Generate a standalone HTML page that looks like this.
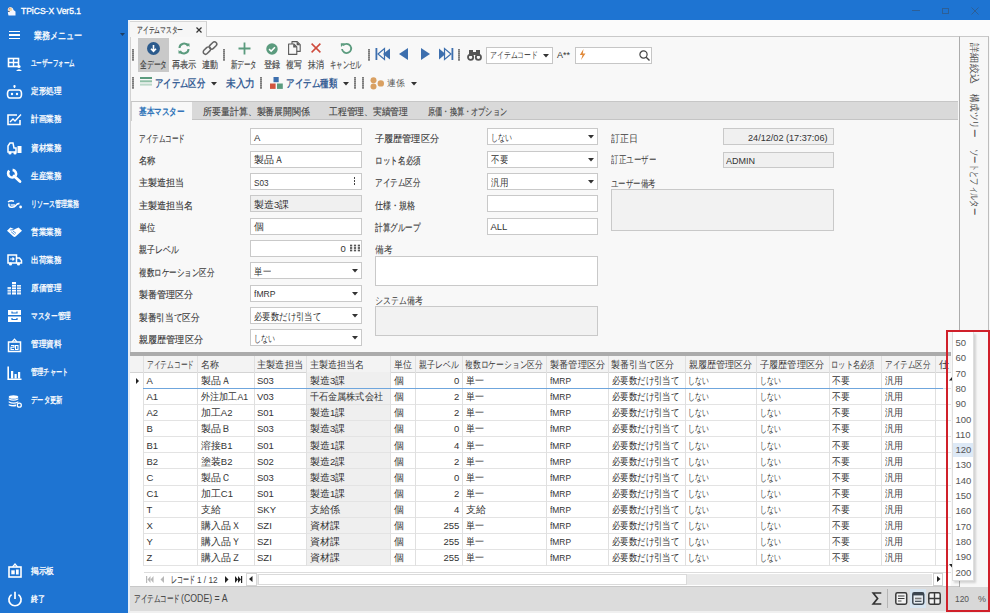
<!DOCTYPE html><html><head><meta charset="utf-8"><style>
html,body{margin:0;padding:0;width:990px;height:613px;overflow:hidden;background:#1e74d2}
body{position:relative;font-family:"Liberation Sans",sans-serif}
body div{position:absolute;box-sizing:border-box}
.t{white-space:nowrap}
.s{-webkit-text-stroke:0.15px currentColor}
svg{position:absolute;overflow:visible}
</style></head><body>
<div style="left:0px;top:0px;width:990px;height:613px;background:#1e74d2"></div>
<svg style="left:6px;top:6px" width="10" height="10" viewBox="0 0 10 10"><path d="M2 5Q1 2 4 1.2Q7 1 7.5 4L9.5 5.5V9.5H2.5Q1.5 7 2 5z" fill="#f4f6ff"/><circle cx="4.2" cy="3.2" r="1.9" fill="#f0d8a8"/><circle cx="3.6" cy="2.6" r="0.8" fill="#e08a80"/><path d="M2 5.2L3.6 5.6" stroke="#334" stroke-width="0.9"/></svg>
<div class="t" style="left:21.00px;top:4.25px;width:64.0px;font-size:9.5px;line-height:13.5px;color:#fff;font-weight:400;-webkit-text-stroke:0.35px #fff;transform:scaleX(0.895);transform-origin:0 50%;--tw:60.00;"><span>TPiCS-X Ver5.1</span></div>
<div style="left:912px;top:10px;width:8px;height:1px;background:#2d5f96"></div>
<div style="left:942px;top:8px;width:7px;height:6px;border:1px solid #2d5f96"></div>
<svg style="left:971px;top:7px" width="8" height="8" viewBox="0 0 8 8"><path d="M0.5 0.5L7.5 7.5M7.5 0.5L0.5 7.5" stroke="#2d5f96" stroke-width="1"/></svg>
<div style="left:9px;top:31.0px;width:11px;height:1.4px;background:#fff"></div>
<div style="left:9px;top:34.4px;width:11px;height:1.4px;background:#fff"></div>
<div style="left:9px;top:37.8px;width:11px;height:1.4px;background:#fff"></div>
<div class="t" style="left:33.50px;top:28.80px;width:52.5px;font-size:10px;line-height:14px;color:#fff;font-weight:400;-webkit-text-stroke:0.3px #fff;transform:scaleX(0.808);transform-origin:0 50%;--tw:48.50;"><span>業務メニュー</span></div>
<svg style="left:120px;top:33px" width="5" height="4"><path d="M0 0L5 0L2.5 3z" fill="#1b3f66"/></svg>
<div class="t" style="left:30.50px;top:57.25px;width:48.0px;font-size:8.5px;line-height:12.5px;color:#fff;font-weight:400;-webkit-text-stroke:0.3px #fff;transform:scaleX(0.611);transform-origin:0 50%;--tw:44.00;"><span>ユーザーフォーム</span></div>
<svg style="left:7px;top:56.5px" width="15" height="14" viewBox="0 0 15 14"><rect x="1.5" y="1.5" width="10" height="8" fill="none" stroke="#fff" stroke-width="1.6"/><path d="M1.5 5.5H11.5M6.5 1.5V9.5" stroke="#fff" stroke-width="1.4"/><circle cx="12" cy="9.5" r="1.6" fill="#fff"/><path d="M9 14Q12 10.5 15 14z" fill="#fff"/></svg>
<div class="t" style="left:30.50px;top:85.35px;width:34.5px;font-size:8.5px;line-height:12.5px;color:#fff;font-weight:400;-webkit-text-stroke:0.3px #fff;transform:scaleX(0.847);transform-origin:0 50%;--tw:30.50;"><span>定形処理</span></div>
<svg style="left:7px;top:84.6px" width="15" height="14" viewBox="0 0 15 14"><path d="M7.5 0.5V3" stroke="#fff" stroke-width="1.4"/><circle cx="7.5" cy="1.2" r="1.1" fill="#fff"/><path d="M3 5H12Q14.5 5 14.5 9Q14.5 13 12 13H3Q0.5 13 0.5 9Q0.5 5 3 5z" fill="none" stroke="#fff" stroke-width="1.6"/><circle cx="5" cy="9" r="1.2" fill="#fff"/><circle cx="10" cy="9" r="1.2" fill="#fff"/></svg>
<div class="t" style="left:30.50px;top:113.45px;width:34.5px;font-size:8.5px;line-height:12.5px;color:#fff;font-weight:400;-webkit-text-stroke:0.3px #fff;transform:scaleX(0.847);transform-origin:0 50%;--tw:30.50;"><span>計画業務</span></div>
<svg style="left:7px;top:112.7px" width="15" height="14" viewBox="0 0 15 14"><path d="M10 2H1V11.5H13V7" fill="none" stroke="#fff" stroke-width="1.6"/><path d="M3 9L6 6L8 8L14 1.5" fill="none" stroke="#fff" stroke-width="1.4"/></svg>
<div class="t" style="left:30.50px;top:141.55px;width:34.5px;font-size:8.5px;line-height:12.5px;color:#fff;font-weight:400;-webkit-text-stroke:0.3px #fff;transform:scaleX(0.847);transform-origin:0 50%;--tw:30.50;"><span>資材業務</span></div>
<svg style="left:7px;top:140.8px" width="15" height="14" viewBox="0 0 15 14"><path d="M1 9V5L3 2H6L7 7H9V11H1z" fill="none" stroke="#fff" stroke-width="1.5"/><circle cx="3" cy="12" r="1.6" fill="#fff"/><circle cx="8" cy="12" r="1.6" fill="#fff"/><rect x="10.5" y="5" width="4" height="7" fill="#fff"/></svg>
<div class="t" style="left:30.50px;top:169.65px;width:34.5px;font-size:8.5px;line-height:12.5px;color:#fff;font-weight:400;-webkit-text-stroke:0.3px #fff;transform:scaleX(0.847);transform-origin:0 50%;--tw:30.50;"><span>生産業務</span></div>
<svg style="left:7px;top:168.9px" width="15" height="14" viewBox="0 0 15 14"><path d="M2.2 1.6A4 4 0 1 0 8.2 7.2" fill="none" stroke="#fff" stroke-width="2.6"/><path d="M8.6 6.8A4 4 0 0 0 5.6 0.9" fill="none" stroke="#fff" stroke-width="2.6"/><path d="M7 7L13 12.6" stroke="#fff" stroke-width="2.8" stroke-linecap="round"/></svg>
<div class="t" style="left:30.50px;top:197.75px;width:52.0px;font-size:8.5px;line-height:12.5px;color:#fff;font-weight:400;-webkit-text-stroke:0.3px #fff;transform:scaleX(0.667);transform-origin:0 50%;--tw:48.00;"><span>リソース管理業務</span></div>
<svg style="left:7px;top:197.0px" width="15" height="14" viewBox="0 0 15 14"><g transform="translate(0,3)"><path d="M1 2Q3.5 0 7 1.2" fill="none" stroke="#fff" stroke-width="1.5"/><path d="M2 3.6Q1.2 7 4.5 7.2Q7.5 7.4 9 5.2Q10 3.6 12.5 3.4" fill="none" stroke="#fff" stroke-width="1.6"/><path d="M3.6 5H8" stroke="#fff" stroke-width="1.3"/><circle cx="13.6" cy="7" r="1.4" fill="#fff"/></g></svg>
<div class="t" style="left:30.50px;top:225.85px;width:34.5px;font-size:8.5px;line-height:12.5px;color:#fff;font-weight:400;-webkit-text-stroke:0.3px #fff;transform:scaleX(0.847);transform-origin:0 50%;--tw:30.50;"><span>営業業務</span></div>
<svg style="left:7px;top:225.1px" width="15" height="14" viewBox="0 0 15 14"><g transform="translate(0,2)"><path d="M0 3.8L3.4 0.6L7.5 2.2L11.6 0.6L15 3.8L8.6 9.6Q7.5 10.4 6.4 9.6z" fill="#fff"/><path d="M4.2 4.8L7.6 7.6M5.8 3.8L9 6.4M3.2 3L7.4 2.4" stroke="#1e74d2" stroke-width="0.8" fill="none"/></g></svg>
<div class="t" style="left:30.50px;top:253.95px;width:34.5px;font-size:8.5px;line-height:12.5px;color:#fff;font-weight:400;-webkit-text-stroke:0.3px #fff;transform:scaleX(0.847);transform-origin:0 50%;--tw:30.50;"><span>出荷業務</span></div>
<svg style="left:7px;top:253.2px" width="15" height="14" viewBox="0 0 15 14"><path d="M1 2H9.5V10H1z" fill="none" stroke="#fff" stroke-width="1.5"/><path d="M9.5 5H12.5L14.5 7.5V10H9.5" fill="none" stroke="#fff" stroke-width="1.5"/><circle cx="3.5" cy="11" r="1.6" fill="#fff"/><circle cx="11.5" cy="11" r="1.6" fill="#fff"/><path d="M3 6H7M5.5 4.5L7 6L5.5 7.5" stroke="#fff" stroke-width="1.2" fill="none"/></svg>
<div class="t" style="left:30.50px;top:282.05px;width:34.5px;font-size:8.5px;line-height:12.5px;color:#fff;font-weight:400;-webkit-text-stroke:0.3px #fff;transform:scaleX(0.847);transform-origin:0 50%;--tw:30.50;"><span>原価管理</span></div>
<svg style="left:7px;top:281.3px" width="15" height="14" viewBox="0 0 15 14"><g fill="#fff"><rect x="0.5" y="6" width="3.5" height="7.5" opacity=".85"/><rect x="5" y="1" width="4" height="12.5"/><rect x="10" y="4" width="4" height="9.5" opacity=".9"/></g><path d="M0 8.5H15M0 11H15M5 3.5H9M5 6H15" stroke="#1e74d2" stroke-width="0.7"/></svg>
<div class="t" style="left:30.50px;top:310.15px;width:44.0px;font-size:8.5px;line-height:12.5px;color:#fff;font-weight:400;-webkit-text-stroke:0.3px #fff;transform:scaleX(0.741);transform-origin:0 50%;--tw:40.00;"><span>マスター管理</span></div>
<svg style="left:7px;top:309.4px" width="15" height="14" viewBox="0 0 15 14"><path d="M1 1H14V6H1zM1 7.5H14V13H1z" fill="#fff"/><path d="M5 2.5V4H10V2.5M5 9V10.5H10V9" fill="none" stroke="#1e74d2" stroke-width="1.2"/></svg>
<div class="t" style="left:30.50px;top:338.25px;width:34.5px;font-size:8.5px;line-height:12.5px;color:#fff;font-weight:400;-webkit-text-stroke:0.3px #fff;transform:scaleX(0.847);transform-origin:0 50%;--tw:30.50;"><span>管理資料</span></div>
<svg style="left:7px;top:337.5px" width="15" height="14" viewBox="0 0 15 14"><rect x="1.5" y="4" width="12" height="9.5" fill="none" stroke="#fff" stroke-width="1.5"/><path d="M5 4L7.5 1.2L10 4" fill="none" stroke="#fff" stroke-width="1.2"/><path d="M4 7.5H7V9.2H4V11.5H7M8.5 7.5H11V11.5H8.5z" fill="none" stroke="#fff" stroke-width="1.1"/></svg>
<div class="t" style="left:30.50px;top:366.35px;width:41.5px;font-size:8.5px;line-height:12.5px;color:#fff;font-weight:400;-webkit-text-stroke:0.3px #fff;transform:scaleX(0.694);transform-origin:0 50%;--tw:37.50;"><span>管理チャート</span></div>
<svg style="left:7px;top:365.6px" width="15" height="14" viewBox="0 0 15 14"><path d="M1.2 0.5V13.3H14.5" fill="none" stroke="#fff" stroke-width="1.6"/><rect x="4" y="5" width="2.2" height="7.5" fill="#fff"/><rect x="7.5" y="8" width="2.2" height="4.5" fill="#fff"/><rect x="11" y="6" width="2.2" height="6.5" fill="#fff"/></svg>
<div class="t" style="left:30.50px;top:394.45px;width:35.5px;font-size:8.5px;line-height:12.5px;color:#fff;font-weight:400;-webkit-text-stroke:0.3px #fff;transform:scaleX(0.700);transform-origin:0 50%;--tw:31.50;"><span>データ更新</span></div>
<svg style="left:7px;top:393.7px" width="15" height="14" viewBox="0 0 15 14"><g transform="translate(1,1)"><ellipse cx="5.5" cy="2" rx="4.8" ry="1.8" fill="#fff"/><path d="M0.7 3.2V4.6Q5.5 7 10.3 4.6V3.2Q5.5 5.6 0.7 3.2z" fill="#fff"/><path d="M0.7 6.2V7.6Q5.5 10 10.3 7.6V6.2Q5.5 8.6 0.7 6.2z" fill="#fff"/><path d="M0.7 9.2V10.4Q4 12 8 11.2V9.6Q4 10.6 0.7 9.2z" fill="#fff"/><circle cx="11.3" cy="10.2" r="2" fill="none" stroke="#fff" stroke-width="1.3"/></g></svg>
<div class="t" style="left:30.70px;top:565.25px;width:27.2px;font-size:8.5px;line-height:12.5px;color:#fff;font-weight:400;-webkit-text-stroke:0.3px #fff;transform:scaleX(0.859);transform-origin:0 50%;--tw:23.20;"><span>掲示板</span></div>
<svg style="left:7.5px;top:563px" width="14" height="15" viewBox="0 0 14 15"><rect x="1" y="4" width="12" height="10" fill="none" stroke="#fff" stroke-width="1.6"/><path d="M4.5 4L7 1L9.5 4" fill="none" stroke="#fff" stroke-width="1.2"/><rect x="3.3" y="7.3" width="3.4" height="4" fill="#fff"/><rect x="8" y="6.5" width="2.7" height="5" fill="#fff"/></svg>
<div class="t" style="left:30.70px;top:593.25px;width:18.3px;font-size:8.5px;line-height:12.5px;color:#fff;font-weight:400;-webkit-text-stroke:0.3px #fff;transform:scaleX(0.794);transform-origin:0 50%;--tw:14.30;"><span>終了</span></div>
<svg style="left:6.5px;top:591px" width="16" height="16" viewBox="0 0 16 16"><path d="M4.6 3.6A6.1 6.1 0 1 0 11.4 3.6" fill="none" stroke="#fff" stroke-width="1.7"/><path d="M8 0.8V8" stroke="#fff" stroke-width="1.7"/></svg>
<div style="left:128px;top:20px;width:862px;height:593px;background:#f8f8f8"></div>
<div style="left:128px;top:20px;width:1.5px;height:593px;background:#e6eef7"></div>
<div style="left:129.5px;top:20px;width:1px;height:593px;background:#d2d2d2"></div>
<div style="left:130px;top:20px;width:860px;height:17px;background:#fbfbfb"></div>
<div style="left:130px;top:36px;width:859px;height:1px;background:#c9c9c9"></div>
<div style="left:130px;top:21px;width:77px;height:16px;background:#f6f6f6;border-right:1px solid #cfcfcf;border-top:1px solid #d6d6d6"></div>
<div class="t s" style="left:137.00px;top:23.80px;width:50.0px;font-size:9px;line-height:13px;color:#444;font-weight:400;;transform:scaleX(0.639);transform-origin:0 50%;--tw:46.00;"><span>アイテムマスター</span></div>
<svg style="left:196px;top:27px" width="6" height="6" viewBox="0 0 6 6"><path d="M0.5 0.5L5.5 5.5M5.5 0.5L0.5 5.5" stroke="#333" stroke-width="1.2"/></svg>
<div style="left:132px;top:49px;width:2px;height:12px;background:repeating-linear-gradient(#7c7c7c 0 1.5px,#9c9c9c 1.5px 2px)"></div>
<div style="left:223px;top:49px;width:2px;height:12px;background:repeating-linear-gradient(#7c7c7c 0 1.5px,#9c9c9c 1.5px 2px)"></div>
<div style="left:368px;top:49px;width:2px;height:12px;background:repeating-linear-gradient(#7c7c7c 0 1.5px,#9c9c9c 1.5px 2px)"></div>
<div style="left:458px;top:49px;width:2px;height:12px;background:repeating-linear-gradient(#7c7c7c 0 1.5px,#9c9c9c 1.5px 2px)"></div>
<div style="left:132px;top:77px;width:2px;height:12px;background:repeating-linear-gradient(#7c7c7c 0 1.5px,#9c9c9c 1.5px 2px)"></div>
<div style="left:260.4px;top:77px;width:2px;height:12px;background:repeating-linear-gradient(#7c7c7c 0 1.5px,#9c9c9c 1.5px 2px)"></div>
<div style="left:353.7px;top:77px;width:2px;height:12px;background:repeating-linear-gradient(#7c7c7c 0 1.5px,#9c9c9c 1.5px 2px)"></div>
<div style="left:361.5px;top:77px;width:2px;height:12px;background:repeating-linear-gradient(#7c7c7c 0 1.5px,#9c9c9c 1.5px 2px)"></div>
<div style="left:138px;top:38px;width:31px;height:34px;background:#c9c9c9"></div>
<svg style="left:147px;top:42px" width="13" height="13" viewBox="0 0 13 13"><circle cx="6.5" cy="6.5" r="6.5" fill="#2b5a8c"/><path d="M6.5 3V9M4 6.7L6.5 9.3L9 6.7" stroke="#fff" stroke-width="1.6" fill="none"/></svg>
<svg style="left:177px;top:42px" width="14" height="13" viewBox="0 0 14 13"><path d="M2.5 6A4.5 4.5 0 0 1 11 4" fill="none" stroke="#5b9b7e" stroke-width="2"/><path d="M11.5 7A4.5 4.5 0 0 1 3 9" fill="none" stroke="#5b9b7e" stroke-width="2"/><path d="M9 1.5L12.5 1.5L12.5 5z" fill="#5b9b7e"/><path d="M5 11.5L1.5 11.5L1.5 8z" fill="#5b9b7e"/></svg>
<svg style="left:202px;top:40px" width="16" height="16" viewBox="0 0 16 16"><g fill="none" stroke="#666" stroke-width="1.5"><rect x="8.8" y="1.2" width="4.6" height="8.4" rx="2.3" transform="rotate(45 11.1 5.4)"/><rect x="2.6" y="6.4" width="4.6" height="8.4" rx="2.3" transform="rotate(45 4.9 10.6)"/></g></svg>
<svg style="left:238px;top:42px" width="13" height="13" viewBox="0 0 13 13"><path d="M6.5 0.5V12.5M0.5 6.5H12.5" stroke="#5b9b7e" stroke-width="1.8"/></svg>
<svg style="left:265.5px;top:42.5px" width="12" height="12" viewBox="0 0 13 13"><circle cx="6.5" cy="6.5" r="6.2" fill="#5b9b7e"/><path d="M3.3 6.6L5.6 8.8L9.7 4.5" stroke="#fff" stroke-width="1.6" fill="none"/></svg>
<svg style="left:287.5px;top:41px" width="13" height="14" viewBox="0 0 13 14"><g stroke="#5a5a5a" stroke-width="1.1" stroke-linejoin="round"><path d="M4 0.6H9.2L12.2 3.6V10.4H4z" fill="#f8f8f8"/><path d="M0.6 3H5.8L8.8 6V13.4H0.6z" fill="#f8f8f8"/></g><path d="M8.6 0.6L12.2 4.2H8.6z" fill="#5a5a5a"/><path d="M5.2 3L8.8 6.6H5.2z" fill="#5a5a5a"/></svg>
<svg style="left:311px;top:43.3px" width="10" height="10" viewBox="0 0 10 10"><path d="M0.6 0.6L9.4 9.4M9.4 0.6L0.6 9.4" stroke="#cf4a3c" stroke-width="1.5"/></svg>
<svg style="left:339.5px;top:42px" width="13" height="13" viewBox="0 0 13 13"><path d="M3 3.5A4.6 4.6 0 1 1 2 7" fill="none" stroke="#5b9b7e" stroke-width="1.8"/><path d="M0.8 1.2L4.8 1.2L1 5z" fill="#5b9b7e"/></svg>
<div class="t s" style="left:140.00px;top:58.05px;width:31.0px;font-size:9.5px;line-height:13.5px;color:#444;font-weight:400;;transform:scaleX(0.675);transform-origin:0 50%;--tw:27.00;"><span>全データ</span></div>
<div class="t s" style="left:172.00px;top:58.05px;width:28.6px;font-size:9.5px;line-height:13.5px;color:#444;font-weight:400;;transform:scaleX(0.820);transform-origin:0 50%;--tw:24.60;"><span>再表示</span></div>
<div class="t s" style="left:202.00px;top:58.05px;width:20.0px;font-size:9.5px;line-height:13.5px;color:#444;font-weight:400;;transform:scaleX(0.800);transform-origin:0 50%;--tw:16.00;"><span>連動</span></div>
<div class="t s" style="left:231.00px;top:58.05px;width:29.7px;font-size:9.5px;line-height:13.5px;color:#444;font-weight:400;;transform:scaleX(0.642);transform-origin:0 50%;--tw:25.70;"><span>新データ</span></div>
<div class="t s" style="left:263.50px;top:58.05px;width:20.2px;font-size:9.5px;line-height:13.5px;color:#444;font-weight:400;;transform:scaleX(0.810);transform-origin:0 50%;--tw:16.20;"><span>登録</span></div>
<div class="t s" style="left:286.00px;top:58.05px;width:19.7px;font-size:9.5px;line-height:13.5px;color:#444;font-weight:400;;transform:scaleX(0.785);transform-origin:0 50%;--tw:15.70;"><span>複写</span></div>
<div class="t s" style="left:308.00px;top:58.05px;width:20.0px;font-size:9.5px;line-height:13.5px;color:#444;font-weight:400;;transform:scaleX(0.800);transform-origin:0 50%;--tw:16.00;"><span>抹消</span></div>
<div class="t s" style="left:330.00px;top:58.05px;width:35.8px;font-size:9.5px;line-height:13.5px;color:#444;font-weight:400;;transform:scaleX(0.636);transform-origin:0 50%;--tw:31.80;"><span>キャンセル</span></div>
<svg style="left:375px;top:48px" width="16" height="12" viewBox="0 0 16 12"><rect x="0.5" y="0" width="1.8" height="12" fill="#3d6fae"/><path d="M3 6L9.5 0.5V11.5z" fill="none" stroke="#3d6fae" stroke-width="1.2"/><path d="M8 6L15 0.5V11.5z" fill="#3d6fae"/></svg>
<svg style="left:399px;top:48px" width="10" height="12" viewBox="0 0 10 12"><path d="M0 6L9 0V12z" fill="#3d6fae"/></svg>
<svg style="left:421px;top:48px" width="10" height="12" viewBox="0 0 10 12"><path d="M9 6L0 0V12z" fill="#3d6fae"/></svg>
<svg style="left:438px;top:48px" width="16" height="12" viewBox="0 0 16 12"><path d="M1 0.5V11.5L7.5 6z" fill="#3d6fae"/><path d="M6.5 0.5V11.5L13 6z" fill="none" stroke="#3d6fae" stroke-width="1.2"/><rect x="13.5" y="0" width="1.8" height="12" fill="#3d6fae"/></svg>
<svg style="left:466.5px;top:48.5px" width="15" height="12" viewBox="0 0 15 12"><g fill="none" stroke="#555" stroke-width="1.8"><circle cx="3.6" cy="8.2" r="2.6"/><circle cx="11.4" cy="8.2" r="2.6"/></g><path d="M2 1H6V7H2zM9 1H13V7H9z" fill="#555"/><rect x="6" y="3" width="3" height="3" fill="#555"/></svg>
<div style="left:486px;top:46.5px;width:67px;height:17px;background:#fff;border:1px solid #c6c6c6"></div>
<div class="t" style="left:490.00px;top:48.50px;width:52.0px;font-size:9px;line-height:13px;color:#444;font-weight:400;;transform:scaleX(0.762);transform-origin:0 50%;--tw:48.00;"><span>アイテムコード</span></div>
<svg style="left:543px;top:53.5px" width="6" height="4"><path d="M0 0H6L3 3.5z" fill="#333"/></svg>
<div class="t" style="left:557.00px;top:49.00px;width:17.0px;font-size:9px;line-height:13px;color:#333;font-weight:400;letter-spacing:-0.01px;;--tw:13.00;"><span>A**</span></div>
<div style="left:575px;top:46.5px;width:77px;height:17px;background:#fff;border:1px solid #c6c6c6"></div>
<svg style="left:579px;top:49px" width="7" height="11" viewBox="0 0 7 11"><path d="M4.5 0L0.8 6H3.5L2 11L6.5 4.5H3.8z" fill="#e0893a"/></svg>
<svg style="left:639px;top:49.5px" width="11" height="11" viewBox="0 0 11 11"><circle cx="4.5" cy="4.5" r="3.6" fill="none" stroke="#444" stroke-width="1.2"/><path d="M7.2 7.2L10.5 10.5" stroke="#444" stroke-width="1.4"/></svg>
<svg style="left:140px;top:77px" width="12" height="9" viewBox="0 0 12 9"><rect y="0" width="12" height="2" fill="#5b9b7e"/><rect y="3.3" width="12" height="2" fill="#8fbfa6"/><rect y="6.6" width="12" height="2" fill="#bcd8c9"/></svg>
<div class="t" style="left:155.00px;top:76.00px;width:54.0px;font-size:11px;line-height:15px;color:#3a6196;font-weight:700;;transform:scaleX(0.758);transform-origin:0 50%;--tw:50.00;"><span>アイテム区分</span></div>
<svg style="left:211px;top:82px" width="6" height="4"><path d="M0 0H6L3 3.5z" fill="#333"/></svg>
<div class="t" style="left:226.00px;top:76.00px;width:33.0px;font-size:11px;line-height:15px;color:#3a6196;font-weight:700;;transform:scaleX(0.879);transform-origin:0 50%;--tw:29.00;"><span>未入力</span></div>
<svg style="left:270px;top:77px" width="13" height="12" viewBox="0 0 13 12"><rect x="3.5" y="0" width="5.2" height="5.2" fill="#3d6fae"/><rect x="0" y="6.5" width="5.6" height="5.4" fill="#d2553f"/><rect x="7" y="6.5" width="5.8" height="5.4" fill="#5b9b7e"/></svg>
<div class="t" style="left:286.00px;top:76.00px;width:55.0px;font-size:11px;line-height:15px;color:#3a6196;font-weight:700;;transform:scaleX(0.773);transform-origin:0 50%;--tw:51.00;"><span>アイテム種類</span></div>
<svg style="left:343px;top:82px" width="6" height="4"><path d="M0 0H6L3 3.5z" fill="#333"/></svg>
<svg style="left:369.5px;top:77px" width="15" height="13" viewBox="0 0 15 13"><g fill="#d9a062"><circle cx="3.5" cy="3.2" r="3"/><circle cx="3.5" cy="9.6" r="3"/><circle cx="10.8" cy="6.4" r="3.2"/></g></svg>
<div class="t" style="left:387.00px;top:77.00px;width:21.6px;font-size:9px;line-height:13px;color:#555;font-weight:400;;transform:scaleX(0.978);transform-origin:0 50%;--tw:17.60;"><span>連係</span></div>
<svg style="left:411px;top:82px" width="6" height="4"><path d="M0 0H6L3 3.5z" fill="#333"/></svg>
<div style="left:131px;top:102px;width:827px;height:18px;background:#d9d9d9;border-bottom:1px solid #c4c4c4"></div>
<div style="left:131px;top:102px;width:61px;height:19px;background:#f8f8f8;border-left:1px solid #d0d0d0"></div>
<div style="left:131px;top:101.3px;width:827px;height:1px;background:#c6c6c6"></div>
<div class="t" style="left:139.00px;top:105.45px;width:49.6px;font-size:9.5px;line-height:13.5px;color:#2f74b8;font-weight:700;;transform:scaleX(0.760);transform-origin:0 50%;--tw:45.60;"><span>基本マスター</span></div>
<div class="t s" style="left:202.70px;top:104.75px;width:111.0px;font-size:9.5px;line-height:13.5px;color:#444;font-weight:400;;transform:scaleX(0.892);transform-origin:0 50%;--tw:107.00;"><span>所要量計算、製番展開関係</span></div>
<div class="t s" style="left:329.00px;top:104.75px;width:83.0px;font-size:9.5px;line-height:13.5px;color:#444;font-weight:400;;transform:scaleX(0.878);transform-origin:0 50%;--tw:79.00;"><span>工程管理、実績管理</span></div>
<div class="t s" style="left:428.00px;top:104.75px;width:83.0px;font-size:9.5px;line-height:13.5px;color:#444;font-weight:400;;transform:scaleX(0.718);transform-origin:0 50%;--tw:79.00;"><span>原価・換算・オプション</span></div>
<div class="t s" style="left:139.30px;top:131.70px;width:50.0px;font-size:10px;line-height:14px;color:#3a3a3a;font-weight:400;;transform:scaleX(0.657);transform-origin:0 50%;--tw:46.00;"><span>アイテムコード</span></div>
<div style="left:250px;top:128.2px;width:111.5px;height:17px;background:#fff;border:1px solid #c9c9c9"></div>
<div class="t" style="left:254.00px;top:130.95px;width:10.3px;font-size:9.5px;line-height:13.5px;color:#333;font-weight:400;;"><span>A</span></div>
<div class="t s" style="left:139.30px;top:154.05px;width:20.7px;font-size:10px;line-height:14px;color:#3a3a3a;font-weight:400;;transform:scaleX(0.835);transform-origin:0 50%;--tw:16.70;"><span>名称</span></div>
<div style="left:250px;top:150.54999999999998px;width:111.5px;height:17px;background:#fff;border:1px solid #c9c9c9"></div>
<div class="t" style="left:254.00px;top:153.30px;width:34.0px;font-size:9.5px;line-height:13.5px;color:#333;font-weight:400;;"><span>製品Ａ</span></div>
<div class="t s" style="left:139.30px;top:176.40px;width:49.0px;font-size:10px;line-height:14px;color:#3a3a3a;font-weight:400;;transform:scaleX(0.900);transform-origin:0 50%;--tw:45.00;"><span>主製造担当</span></div>
<div style="left:250px;top:172.89999999999998px;width:111.5px;height:17px;background:#fff;border:1px solid #c9c9c9"></div>
<div class="t" style="left:254.00px;top:175.65px;width:18.5px;font-size:9.5px;line-height:13.5px;color:#333;font-weight:400;;transform:scaleX(0.858);transform-origin:0 50%;--tw:14.50;"><span>S03</span></div>
<div style="left:353.5px;top:177.39999999999998px;width:1.6px;height:1.6px;background:#444"></div>
<div style="left:353.5px;top:180.39999999999998px;width:1.6px;height:1.6px;background:#444"></div>
<div style="left:353.5px;top:183.39999999999998px;width:1.6px;height:1.6px;background:#444"></div>
<div class="t s" style="left:139.30px;top:198.75px;width:58.4px;font-size:10px;line-height:14px;color:#3a3a3a;font-weight:400;;transform:scaleX(0.907);transform-origin:0 50%;--tw:54.40;"><span>主製造担当名</span></div>
<div style="left:250px;top:195.25px;width:111.5px;height:17px;background:#f0f0f0;border:1px solid #c9c9c9"></div>
<div class="t" style="left:254.00px;top:198.00px;width:39.3px;font-size:9.5px;line-height:13.5px;color:#333;font-weight:400;;"><span>製造3課</span></div>
<div class="t s" style="left:139.30px;top:221.10px;width:20.7px;font-size:10px;line-height:14px;color:#3a3a3a;font-weight:400;;transform:scaleX(0.835);transform-origin:0 50%;--tw:16.70;"><span>単位</span></div>
<div style="left:250px;top:217.6px;width:111.5px;height:17px;background:#fff;border:1px solid #c9c9c9"></div>
<div class="t" style="left:254.00px;top:220.35px;width:14.0px;font-size:9.5px;line-height:13.5px;color:#333;font-weight:400;;"><span>個</span></div>
<div class="t s" style="left:139.30px;top:243.45px;width:43.4px;font-size:10px;line-height:14px;color:#3a3a3a;font-weight:400;;transform:scaleX(0.788);transform-origin:0 50%;--tw:39.40;"><span>親子レベル</span></div>
<div style="left:250px;top:239.95px;width:111.5px;height:17px;background:#fff;border:1px solid #c9c9c9"></div>
<div class="t" style="left:340.50px;top:242.20px;width:9.3px;font-size:9.5px;line-height:13.5px;color:#333;font-weight:400;;"><span>0</span></div>
<svg style="left:350px;top:243.95px" width="10" height="8" viewBox="0 0 9 6"><g fill="#555"><rect x="0" y="0" width="2" height="1.6"/><rect x="3.5" y="0" width="2" height="1.6"/><rect x="7" y="0" width="2" height="1.6"/><rect x="0" y="2.2" width="2" height="1.6"/><rect x="3.5" y="2.2" width="2" height="1.6"/><rect x="7" y="2.2" width="2" height="1.6"/><rect x="0" y="4.4" width="2" height="1.6"/><rect x="3.5" y="4.4" width="2" height="1.6"/><rect x="7" y="4.4" width="2" height="1.6"/></g></svg>
<div class="t s" style="left:139.30px;top:265.80px;width:79.0px;font-size:10px;line-height:14px;color:#3a3a3a;font-weight:400;;transform:scaleX(0.750);transform-origin:0 50%;--tw:75.00;"><span>複数ロケーション区分</span></div>
<div style="left:250px;top:262.3px;width:111.5px;height:17px;background:#fff;border:1px solid #c9c9c9"></div>
<div class="t" style="left:254.00px;top:265.05px;width:21.0px;font-size:9.5px;line-height:13.5px;color:#333;font-weight:400;;transform:scaleX(0.850);transform-origin:0 50%;--tw:17.00;"><span>単一</span></div>
<svg style="left:352px;top:269.3px" width="6" height="4"><path d="M0 0H6L3 3.5z" fill="#333"/></svg>
<div class="t s" style="left:139.30px;top:288.15px;width:58.0px;font-size:10px;line-height:14px;color:#3a3a3a;font-weight:400;;transform:scaleX(0.900);transform-origin:0 50%;--tw:54.00;"><span>製番管理区分</span></div>
<div style="left:250px;top:284.65px;width:111.5px;height:17px;background:#fff;border:1px solid #c9c9c9"></div>
<div class="t" style="left:254.00px;top:287.40px;width:25.5px;font-size:9.5px;line-height:13.5px;color:#333;font-weight:400;;transform:scaleX(0.905);transform-origin:0 50%;--tw:21.50;"><span>fMRP</span></div>
<svg style="left:352px;top:291.65px" width="6" height="4"><path d="M0 0H6L3 3.5z" fill="#333"/></svg>
<div class="t s" style="left:139.30px;top:310.50px;width:64.7px;font-size:10px;line-height:14px;color:#3a3a3a;font-weight:400;;transform:scaleX(0.867);transform-origin:0 50%;--tw:60.70;"><span>製番引当て区分</span></div>
<div style="left:250px;top:307.0px;width:111.5px;height:17px;background:#fff;border:1px solid #c9c9c9"></div>
<div class="t" style="left:254.00px;top:309.75px;width:71.0px;font-size:9.5px;line-height:13.5px;color:#333;font-weight:400;;transform:scaleX(0.838);transform-origin:0 50%;--tw:67.00;"><span>必要数だけ引当て</span></div>
<svg style="left:352px;top:314.0px" width="6" height="4"><path d="M0 0H6L3 3.5z" fill="#333"/></svg>
<div class="t s" style="left:139.30px;top:332.85px;width:67.7px;font-size:10px;line-height:14px;color:#3a3a3a;font-weight:400;;transform:scaleX(0.910);transform-origin:0 50%;--tw:63.70;"><span>親履歴管理区分</span></div>
<div style="left:250px;top:329.35px;width:111.5px;height:17px;background:#fff;border:1px solid #c9c9c9"></div>
<div class="t" style="left:254.00px;top:332.10px;width:25.0px;font-size:9.5px;line-height:13.5px;color:#333;font-weight:400;;transform:scaleX(0.700);transform-origin:0 50%;--tw:21.00;"><span>しない</span></div>
<svg style="left:352px;top:336.35px" width="6" height="4"><path d="M0 0H6L3 3.5z" fill="#333"/></svg>
<div class="t s" style="left:375.00px;top:131.70px;width:67.8px;font-size:10px;line-height:14px;color:#3a3a3a;font-weight:400;;transform:scaleX(0.911);transform-origin:0 50%;--tw:63.80;"><span>子履歴管理区分</span></div>
<div style="left:486.5px;top:128.2px;width:111.5px;height:17px;background:#fff;border:1px solid #c9c9c9"></div>
<div class="t" style="left:490.50px;top:130.95px;width:25.0px;font-size:9.5px;line-height:13.5px;color:#333;font-weight:400;;transform:scaleX(0.700);transform-origin:0 50%;--tw:21.00;"><span>しない</span></div>
<svg style="left:587.5px;top:135.2px" width="6" height="4"><path d="M0 0H6L3 3.5z" fill="#333"/></svg>
<div class="t s" style="left:375.00px;top:154.05px;width:49.8px;font-size:10px;line-height:14px;color:#3a3a3a;font-weight:400;;transform:scaleX(0.763);transform-origin:0 50%;--tw:45.80;"><span>ロット名必須</span></div>
<div style="left:486.5px;top:150.54999999999998px;width:111.5px;height:17px;background:#fff;border:1px solid #c9c9c9"></div>
<div class="t" style="left:490.50px;top:153.30px;width:21.0px;font-size:9.5px;line-height:13.5px;color:#333;font-weight:400;;transform:scaleX(0.850);transform-origin:0 50%;--tw:17.00;"><span>不要</span></div>
<svg style="left:587.5px;top:157.54999999999998px" width="6" height="4"><path d="M0 0H6L3 3.5z" fill="#333"/></svg>
<div class="t s" style="left:375.00px;top:176.40px;width:49.0px;font-size:10px;line-height:14px;color:#3a3a3a;font-weight:400;;transform:scaleX(0.750);transform-origin:0 50%;--tw:45.00;"><span>アイテム区分</span></div>
<div style="left:486.5px;top:172.89999999999998px;width:111.5px;height:17px;background:#fff;border:1px solid #c9c9c9"></div>
<div class="t" style="left:490.50px;top:175.65px;width:21.0px;font-size:9.5px;line-height:13.5px;color:#333;font-weight:400;;transform:scaleX(0.850);transform-origin:0 50%;--tw:17.00;"><span>汎用</span></div>
<svg style="left:587.5px;top:179.89999999999998px" width="6" height="4"><path d="M0 0H6L3 3.5z" fill="#333"/></svg>
<div class="t s" style="left:375.00px;top:198.75px;width:44.6px;font-size:10px;line-height:14px;color:#3a3a3a;font-weight:400;;transform:scaleX(0.812);transform-origin:0 50%;--tw:40.60;"><span>仕様・規格</span></div>
<div style="left:486.5px;top:195.25px;width:111.5px;height:17px;background:#fff;border:1px solid #c9c9c9"></div>
<div class="t s" style="left:375.00px;top:221.10px;width:49.0px;font-size:10px;line-height:14px;color:#3a3a3a;font-weight:400;;transform:scaleX(0.750);transform-origin:0 50%;--tw:45.00;"><span>計算グループ</span></div>
<div style="left:486.5px;top:217.6px;width:111.5px;height:17px;background:#fff;border:1px solid #c9c9c9"></div>
<div class="t" style="left:490.50px;top:220.35px;width:20.9px;font-size:9.5px;line-height:13.5px;color:#333;font-weight:400;;"><span>ALL</span></div>
<div class="t" style="left:374.60px;top:243.00px;width:21.4px;font-size:10px;line-height:14px;color:#3a3a3a;font-weight:400;;transform:scaleX(0.870);transform-origin:0 50%;--tw:17.40;"><span>備考</span></div>
<div style="left:375px;top:256px;width:223px;height:30px;background:#fff;border:1px solid #c9c9c9"></div>
<div class="t" style="left:374.60px;top:294.00px;width:51.4px;font-size:10px;line-height:14px;color:#3a3a3a;font-weight:400;;transform:scaleX(0.790);transform-origin:0 50%;--tw:47.40;"><span>システム備考</span></div>
<div style="left:375px;top:306.4px;width:223px;height:30px;background:#f2f2f2;border:1px solid #c9c9c9"></div>
<div class="t" style="left:610.60px;top:131.50px;width:30.8px;font-size:10px;line-height:14px;color:#3a3a3a;font-weight:400;;transform:scaleX(0.893);transform-origin:0 50%;--tw:26.80;"><span>訂正日</span></div>
<div style="left:722.5px;top:128.3px;width:111.5px;height:16.5px;background:#f0f0f0;border:1px solid #c9c9c9"></div>
<div class="t" style="left:748.00px;top:131.05px;width:83.5px;font-size:9.5px;line-height:13.5px;color:#333;font-weight:400;;transform:scaleX(0.959);transform-origin:0 50%;--tw:79.50;"><span>24/12/02 (17:37:06)</span></div>
<div class="t" style="left:610.60px;top:153.00px;width:49.0px;font-size:10px;line-height:14px;color:#3a3a3a;font-weight:400;;transform:scaleX(0.750);transform-origin:0 50%;--tw:45.00;"><span>訂正ユーザー</span></div>
<div style="left:722.5px;top:151.6px;width:111.5px;height:16.5px;background:#f0f0f0;border:1px solid #c9c9c9"></div>
<div class="t" style="left:726.00px;top:153.75px;width:33.0px;font-size:9.5px;line-height:13.5px;color:#333;font-weight:400;;transform:scaleX(0.947);transform-origin:0 50%;--tw:29.00;"><span>ADMIN</span></div>
<div class="t" style="left:610.60px;top:176.50px;width:48.4px;font-size:10px;line-height:14px;color:#3a3a3a;font-weight:400;;transform:scaleX(0.740);transform-origin:0 50%;--tw:44.40;"><span>ユーザー備考</span></div>
<div style="left:610.6px;top:189.4px;width:223px;height:42px;background:#f2f2f2;border:1px solid #c9c9c9"></div>
<div style="left:130px;top:352px;width:821px;height:4px;background:#ababab"></div>
<div style="left:130px;top:356px;width:821px;height:230px;background:#fff"></div>
<div style="left:130px;top:356px;width:821px;height:16.5px;background:#f3f3f3;border-bottom:1.5px solid #d4d4d4"></div>
<div style="left:306.4px;top:372px;width:83.6px;height:193.56px;background:#efefef"></div>
<div style="left:143px;top:387.73px;width:808px;height:1px;background:#e3e3e3"></div>
<div style="left:143px;top:403.86px;width:808px;height:1px;background:#e3e3e3"></div>
<div style="left:143px;top:419.99px;width:808px;height:1px;background:#e3e3e3"></div>
<div style="left:143px;top:436.12px;width:808px;height:1px;background:#e3e3e3"></div>
<div style="left:143px;top:452.25px;width:808px;height:1px;background:#e3e3e3"></div>
<div style="left:143px;top:468.38px;width:808px;height:1px;background:#e3e3e3"></div>
<div style="left:143px;top:484.51px;width:808px;height:1px;background:#e3e3e3"></div>
<div style="left:143px;top:500.64px;width:808px;height:1px;background:#e3e3e3"></div>
<div style="left:143px;top:516.77px;width:808px;height:1px;background:#e3e3e3"></div>
<div style="left:143px;top:532.9px;width:808px;height:1px;background:#e3e3e3"></div>
<div style="left:143px;top:549.03px;width:808px;height:1px;background:#e3e3e3"></div>
<div style="left:143px;top:565.16px;width:808px;height:1px;background:#e3e3e3"></div>
<div style="left:143px;top:356px;width:1px;height:210.06px;background:#e0e0e0"></div>
<div style="left:197.3px;top:356px;width:1px;height:210.06px;background:#e0e0e0"></div>
<div style="left:253.5px;top:356px;width:1px;height:210.06px;background:#e0e0e0"></div>
<div style="left:306.4px;top:356px;width:1px;height:210.06px;background:#e0e0e0"></div>
<div style="left:390px;top:356px;width:1px;height:210.06px;background:#e0e0e0"></div>
<div style="left:415.3px;top:356px;width:1px;height:210.06px;background:#e0e0e0"></div>
<div style="left:462.3px;top:356px;width:1px;height:210.06px;background:#e0e0e0"></div>
<div style="left:546.3px;top:356px;width:1px;height:210.06px;background:#e0e0e0"></div>
<div style="left:608px;top:356px;width:1px;height:210.06px;background:#e0e0e0"></div>
<div style="left:684.5px;top:356px;width:1px;height:210.06px;background:#e0e0e0"></div>
<div style="left:756.4px;top:356px;width:1px;height:210.06px;background:#e0e0e0"></div>
<div style="left:828.5px;top:356px;width:1px;height:210.06px;background:#e0e0e0"></div>
<div style="left:881.4px;top:356px;width:1px;height:210.06px;background:#e0e0e0"></div>
<div style="left:934.5px;top:356px;width:1px;height:210.06px;background:#e0e0e0"></div>
<div class="t" style="left:146.70px;top:357.75px;width:51.0px;font-size:9.5px;line-height:13.5px;color:#3a3a3a;font-weight:400;;transform:scaleX(0.671);transform-origin:0 50%;--tw:47.00;"><span>アイテムコード</span></div>
<div class="t" style="left:201.00px;top:357.75px;width:22.0px;font-size:9.5px;line-height:13.5px;color:#3a3a3a;font-weight:400;;transform:scaleX(0.900);transform-origin:0 50%;--tw:18.00;"><span>名称</span></div>
<div class="t" style="left:256.70px;top:357.75px;width:50.0px;font-size:9.5px;line-height:13.5px;color:#3a3a3a;font-weight:400;;transform:scaleX(0.920);transform-origin:0 50%;--tw:46.00;"><span>主製造担当</span></div>
<div class="t" style="left:310.00px;top:357.75px;width:58.5px;font-size:9.5px;line-height:13.5px;color:#3a3a3a;font-weight:400;;transform:scaleX(0.908);transform-origin:0 50%;--tw:54.50;"><span>主製造担当名</span></div>
<div class="t" style="left:393.60px;top:357.75px;width:22.2px;font-size:9.5px;line-height:13.5px;color:#3a3a3a;font-weight:400;;transform:scaleX(0.910);transform-origin:0 50%;--tw:18.20;"><span>単位</span></div>
<div class="t" style="left:418.50px;top:357.75px;width:43.5px;font-size:9.5px;line-height:13.5px;color:#3a3a3a;font-weight:400;;transform:scaleX(0.790);transform-origin:0 50%;--tw:39.50;"><span>親子レベル</span></div>
<div class="t" style="left:465.00px;top:357.75px;width:82.0px;font-size:9.5px;line-height:13.5px;color:#3a3a3a;font-weight:400;;transform:scaleX(0.780);transform-origin:0 50%;--tw:78.00;"><span>複数ロケーション区分</span></div>
<div class="t" style="left:550.00px;top:357.75px;width:59.0px;font-size:9.5px;line-height:13.5px;color:#3a3a3a;font-weight:400;;transform:scaleX(0.917);transform-origin:0 50%;--tw:55.00;"><span>製番管理区分</span></div>
<div class="t" style="left:611.40px;top:357.75px;width:67.0px;font-size:9.5px;line-height:13.5px;color:#3a3a3a;font-weight:400;;transform:scaleX(0.900);transform-origin:0 50%;--tw:63.00;"><span>製番引当て区分</span></div>
<div class="t" style="left:688.50px;top:357.75px;width:67.5px;font-size:9.5px;line-height:13.5px;color:#3a3a3a;font-weight:400;;transform:scaleX(0.907);transform-origin:0 50%;--tw:63.50;"><span>親履歴管理区分</span></div>
<div class="t" style="left:759.70px;top:357.75px;width:68.0px;font-size:9.5px;line-height:13.5px;color:#3a3a3a;font-weight:400;;transform:scaleX(0.914);transform-origin:0 50%;--tw:64.00;"><span>子履歴管理区分</span></div>
<div class="t" style="left:831.30px;top:357.75px;width:47.7px;font-size:9.5px;line-height:13.5px;color:#3a3a3a;font-weight:400;;transform:scaleX(0.728);transform-origin:0 50%;--tw:43.70;"><span>ロット名必須</span></div>
<div class="t" style="left:885.00px;top:357.75px;width:49.3px;font-size:9.5px;line-height:13.5px;color:#3a3a3a;font-weight:400;;transform:scaleX(0.755);transform-origin:0 50%;--tw:45.30;"><span>アイテム区分</span></div>
<div class="t" style="left:938.80px;top:357.75px;width:14.0px;font-size:9.5px;line-height:13.5px;color:#3a3a3a;font-weight:400;;"><span>仕</span></div>
<div class="t" style="left:146.50px;top:374.05px;width:10.3px;font-size:9.5px;line-height:13.5px;color:#333;font-weight:400;;"><span>A</span></div>
<div class="t" style="left:200.80px;top:374.05px;width:34.0px;font-size:9.5px;line-height:13.5px;color:#333;font-weight:400;;"><span>製品Ａ</span></div>
<div class="t" style="left:257.00px;top:374.05px;width:20.9px;font-size:9.5px;line-height:13.5px;color:#333;font-weight:400;;"><span>S03</span></div>
<div class="t" style="left:309.90px;top:374.05px;width:39.3px;font-size:9.5px;line-height:13.5px;color:#333;font-weight:400;;"><span>製造3課</span></div>
<div class="t" style="left:393.50px;top:374.05px;width:14.0px;font-size:9.5px;line-height:13.5px;color:#333;font-weight:400;;"><span>個</span></div>
<div class="t" style="left:454.00px;top:374.05px;width:9.3px;font-size:9.5px;line-height:13.5px;color:#333;font-weight:400;;"><span>0</span></div>
<div class="t" style="left:465.80px;top:374.05px;width:22.0px;font-size:9.5px;line-height:13.5px;color:#333;font-weight:400;;transform:scaleX(0.900);transform-origin:0 50%;--tw:18.00;"><span>単一</span></div>
<div class="t" style="left:549.80px;top:374.05px;width:25.0px;font-size:9.5px;line-height:13.5px;color:#333;font-weight:400;;transform:scaleX(0.884);transform-origin:0 50%;--tw:21.00;"><span>fMRP</span></div>
<div class="t" style="left:611.50px;top:374.05px;width:71.0px;font-size:9.5px;line-height:13.5px;color:#333;font-weight:400;;transform:scaleX(0.838);transform-origin:0 50%;--tw:67.00;"><span>必要数だけ引当て</span></div>
<div class="t" style="left:688.00px;top:374.05px;width:24.5px;font-size:9.5px;line-height:13.5px;color:#333;font-weight:400;;transform:scaleX(0.683);transform-origin:0 50%;--tw:20.50;"><span>しない</span></div>
<div class="t" style="left:759.90px;top:374.05px;width:24.5px;font-size:9.5px;line-height:13.5px;color:#333;font-weight:400;;transform:scaleX(0.683);transform-origin:0 50%;--tw:20.50;"><span>しない</span></div>
<div class="t" style="left:832.00px;top:374.05px;width:21.7px;font-size:9.5px;line-height:13.5px;color:#333;font-weight:400;;transform:scaleX(0.885);transform-origin:0 50%;--tw:17.70;"><span>不要</span></div>
<div class="t" style="left:884.90px;top:374.05px;width:21.7px;font-size:9.5px;line-height:13.5px;color:#333;font-weight:400;;transform:scaleX(0.885);transform-origin:0 50%;--tw:17.70;"><span>汎用</span></div>
<div class="t" style="left:146.50px;top:390.18px;width:15.6px;font-size:9.5px;line-height:13.5px;color:#333;font-weight:400;;"><span>A1</span></div>
<div class="t" style="left:200.80px;top:390.18px;width:51.0px;font-size:9.5px;line-height:13.5px;color:#333;font-weight:400;;transform:scaleX(0.910);transform-origin:0 50%;--tw:47.00;"><span>外注加工A1</span></div>
<div class="t" style="left:257.00px;top:390.18px;width:20.9px;font-size:9.5px;line-height:13.5px;color:#333;font-weight:400;;"><span>V03</span></div>
<div class="t" style="left:309.90px;top:390.18px;width:76.7px;font-size:9.5px;line-height:13.5px;color:#333;font-weight:400;;transform:scaleX(0.909);transform-origin:0 50%;--tw:72.70;"><span>千石金属株式会社</span></div>
<div class="t" style="left:393.50px;top:390.18px;width:14.0px;font-size:9.5px;line-height:13.5px;color:#333;font-weight:400;;"><span>個</span></div>
<div class="t" style="left:454.00px;top:390.18px;width:9.3px;font-size:9.5px;line-height:13.5px;color:#333;font-weight:400;;"><span>2</span></div>
<div class="t" style="left:465.80px;top:390.18px;width:22.0px;font-size:9.5px;line-height:13.5px;color:#333;font-weight:400;;transform:scaleX(0.900);transform-origin:0 50%;--tw:18.00;"><span>単一</span></div>
<div class="t" style="left:549.80px;top:390.18px;width:25.0px;font-size:9.5px;line-height:13.5px;color:#333;font-weight:400;;transform:scaleX(0.884);transform-origin:0 50%;--tw:21.00;"><span>fMRP</span></div>
<div class="t" style="left:611.50px;top:390.18px;width:71.0px;font-size:9.5px;line-height:13.5px;color:#333;font-weight:400;;transform:scaleX(0.838);transform-origin:0 50%;--tw:67.00;"><span>必要数だけ引当て</span></div>
<div class="t" style="left:688.00px;top:390.18px;width:24.5px;font-size:9.5px;line-height:13.5px;color:#333;font-weight:400;;transform:scaleX(0.683);transform-origin:0 50%;--tw:20.50;"><span>しない</span></div>
<div class="t" style="left:759.90px;top:390.18px;width:24.5px;font-size:9.5px;line-height:13.5px;color:#333;font-weight:400;;transform:scaleX(0.683);transform-origin:0 50%;--tw:20.50;"><span>しない</span></div>
<div class="t" style="left:832.00px;top:390.18px;width:21.7px;font-size:9.5px;line-height:13.5px;color:#333;font-weight:400;;transform:scaleX(0.885);transform-origin:0 50%;--tw:17.70;"><span>不要</span></div>
<div class="t" style="left:884.90px;top:390.18px;width:21.7px;font-size:9.5px;line-height:13.5px;color:#333;font-weight:400;;transform:scaleX(0.885);transform-origin:0 50%;--tw:17.70;"><span>汎用</span></div>
<div class="t" style="left:146.50px;top:406.31px;width:15.6px;font-size:9.5px;line-height:13.5px;color:#333;font-weight:400;;"><span>A2</span></div>
<div class="t" style="left:200.80px;top:406.31px;width:35.6px;font-size:9.5px;line-height:13.5px;color:#333;font-weight:400;;"><span>加工A2</span></div>
<div class="t" style="left:257.00px;top:406.31px;width:20.9px;font-size:9.5px;line-height:13.5px;color:#333;font-weight:400;;"><span>S01</span></div>
<div class="t" style="left:309.90px;top:406.31px;width:39.3px;font-size:9.5px;line-height:13.5px;color:#333;font-weight:400;;"><span>製造1課</span></div>
<div class="t" style="left:393.50px;top:406.31px;width:14.0px;font-size:9.5px;line-height:13.5px;color:#333;font-weight:400;;"><span>個</span></div>
<div class="t" style="left:454.00px;top:406.31px;width:9.3px;font-size:9.5px;line-height:13.5px;color:#333;font-weight:400;;"><span>2</span></div>
<div class="t" style="left:465.80px;top:406.31px;width:22.0px;font-size:9.5px;line-height:13.5px;color:#333;font-weight:400;;transform:scaleX(0.900);transform-origin:0 50%;--tw:18.00;"><span>単一</span></div>
<div class="t" style="left:549.80px;top:406.31px;width:25.0px;font-size:9.5px;line-height:13.5px;color:#333;font-weight:400;;transform:scaleX(0.884);transform-origin:0 50%;--tw:21.00;"><span>fMRP</span></div>
<div class="t" style="left:611.50px;top:406.31px;width:71.0px;font-size:9.5px;line-height:13.5px;color:#333;font-weight:400;;transform:scaleX(0.838);transform-origin:0 50%;--tw:67.00;"><span>必要数だけ引当て</span></div>
<div class="t" style="left:688.00px;top:406.31px;width:24.5px;font-size:9.5px;line-height:13.5px;color:#333;font-weight:400;;transform:scaleX(0.683);transform-origin:0 50%;--tw:20.50;"><span>しない</span></div>
<div class="t" style="left:759.90px;top:406.31px;width:24.5px;font-size:9.5px;line-height:13.5px;color:#333;font-weight:400;;transform:scaleX(0.683);transform-origin:0 50%;--tw:20.50;"><span>しない</span></div>
<div class="t" style="left:832.00px;top:406.31px;width:21.7px;font-size:9.5px;line-height:13.5px;color:#333;font-weight:400;;transform:scaleX(0.885);transform-origin:0 50%;--tw:17.70;"><span>不要</span></div>
<div class="t" style="left:884.90px;top:406.31px;width:21.7px;font-size:9.5px;line-height:13.5px;color:#333;font-weight:400;;transform:scaleX(0.885);transform-origin:0 50%;--tw:17.70;"><span>汎用</span></div>
<div class="t" style="left:146.50px;top:422.44px;width:10.3px;font-size:9.5px;line-height:13.5px;color:#333;font-weight:400;;"><span>B</span></div>
<div class="t" style="left:200.80px;top:422.44px;width:34.0px;font-size:9.5px;line-height:13.5px;color:#333;font-weight:400;;"><span>製品Ｂ</span></div>
<div class="t" style="left:257.00px;top:422.44px;width:20.9px;font-size:9.5px;line-height:13.5px;color:#333;font-weight:400;;"><span>S03</span></div>
<div class="t" style="left:309.90px;top:422.44px;width:39.3px;font-size:9.5px;line-height:13.5px;color:#333;font-weight:400;;"><span>製造3課</span></div>
<div class="t" style="left:393.50px;top:422.44px;width:14.0px;font-size:9.5px;line-height:13.5px;color:#333;font-weight:400;;"><span>個</span></div>
<div class="t" style="left:454.00px;top:422.44px;width:9.3px;font-size:9.5px;line-height:13.5px;color:#333;font-weight:400;;"><span>0</span></div>
<div class="t" style="left:465.80px;top:422.44px;width:22.0px;font-size:9.5px;line-height:13.5px;color:#333;font-weight:400;;transform:scaleX(0.900);transform-origin:0 50%;--tw:18.00;"><span>単一</span></div>
<div class="t" style="left:549.80px;top:422.44px;width:25.0px;font-size:9.5px;line-height:13.5px;color:#333;font-weight:400;;transform:scaleX(0.884);transform-origin:0 50%;--tw:21.00;"><span>fMRP</span></div>
<div class="t" style="left:611.50px;top:422.44px;width:71.0px;font-size:9.5px;line-height:13.5px;color:#333;font-weight:400;;transform:scaleX(0.838);transform-origin:0 50%;--tw:67.00;"><span>必要数だけ引当て</span></div>
<div class="t" style="left:688.00px;top:422.44px;width:24.5px;font-size:9.5px;line-height:13.5px;color:#333;font-weight:400;;transform:scaleX(0.683);transform-origin:0 50%;--tw:20.50;"><span>しない</span></div>
<div class="t" style="left:759.90px;top:422.44px;width:24.5px;font-size:9.5px;line-height:13.5px;color:#333;font-weight:400;;transform:scaleX(0.683);transform-origin:0 50%;--tw:20.50;"><span>しない</span></div>
<div class="t" style="left:832.00px;top:422.44px;width:21.7px;font-size:9.5px;line-height:13.5px;color:#333;font-weight:400;;transform:scaleX(0.885);transform-origin:0 50%;--tw:17.70;"><span>不要</span></div>
<div class="t" style="left:884.90px;top:422.44px;width:21.7px;font-size:9.5px;line-height:13.5px;color:#333;font-weight:400;;transform:scaleX(0.885);transform-origin:0 50%;--tw:17.70;"><span>汎用</span></div>
<div class="t" style="left:146.50px;top:438.57px;width:15.6px;font-size:9.5px;line-height:13.5px;color:#333;font-weight:400;;"><span>B1</span></div>
<div class="t" style="left:200.80px;top:438.57px;width:35.6px;font-size:9.5px;line-height:13.5px;color:#333;font-weight:400;;"><span>溶接B1</span></div>
<div class="t" style="left:257.00px;top:438.57px;width:20.9px;font-size:9.5px;line-height:13.5px;color:#333;font-weight:400;;"><span>S01</span></div>
<div class="t" style="left:309.90px;top:438.57px;width:39.3px;font-size:9.5px;line-height:13.5px;color:#333;font-weight:400;;"><span>製造1課</span></div>
<div class="t" style="left:393.50px;top:438.57px;width:14.0px;font-size:9.5px;line-height:13.5px;color:#333;font-weight:400;;"><span>個</span></div>
<div class="t" style="left:454.00px;top:438.57px;width:9.3px;font-size:9.5px;line-height:13.5px;color:#333;font-weight:400;;"><span>4</span></div>
<div class="t" style="left:465.80px;top:438.57px;width:22.0px;font-size:9.5px;line-height:13.5px;color:#333;font-weight:400;;transform:scaleX(0.900);transform-origin:0 50%;--tw:18.00;"><span>単一</span></div>
<div class="t" style="left:549.80px;top:438.57px;width:25.0px;font-size:9.5px;line-height:13.5px;color:#333;font-weight:400;;transform:scaleX(0.884);transform-origin:0 50%;--tw:21.00;"><span>fMRP</span></div>
<div class="t" style="left:611.50px;top:438.57px;width:71.0px;font-size:9.5px;line-height:13.5px;color:#333;font-weight:400;;transform:scaleX(0.838);transform-origin:0 50%;--tw:67.00;"><span>必要数だけ引当て</span></div>
<div class="t" style="left:688.00px;top:438.57px;width:24.5px;font-size:9.5px;line-height:13.5px;color:#333;font-weight:400;;transform:scaleX(0.683);transform-origin:0 50%;--tw:20.50;"><span>しない</span></div>
<div class="t" style="left:759.90px;top:438.57px;width:24.5px;font-size:9.5px;line-height:13.5px;color:#333;font-weight:400;;transform:scaleX(0.683);transform-origin:0 50%;--tw:20.50;"><span>しない</span></div>
<div class="t" style="left:832.00px;top:438.57px;width:21.7px;font-size:9.5px;line-height:13.5px;color:#333;font-weight:400;;transform:scaleX(0.885);transform-origin:0 50%;--tw:17.70;"><span>不要</span></div>
<div class="t" style="left:884.90px;top:438.57px;width:21.7px;font-size:9.5px;line-height:13.5px;color:#333;font-weight:400;;transform:scaleX(0.885);transform-origin:0 50%;--tw:17.70;"><span>汎用</span></div>
<div class="t" style="left:146.50px;top:454.70px;width:15.6px;font-size:9.5px;line-height:13.5px;color:#333;font-weight:400;;"><span>B2</span></div>
<div class="t" style="left:200.80px;top:454.70px;width:35.6px;font-size:9.5px;line-height:13.5px;color:#333;font-weight:400;;"><span>塗装B2</span></div>
<div class="t" style="left:257.00px;top:454.70px;width:20.9px;font-size:9.5px;line-height:13.5px;color:#333;font-weight:400;;"><span>S02</span></div>
<div class="t" style="left:309.90px;top:454.70px;width:39.3px;font-size:9.5px;line-height:13.5px;color:#333;font-weight:400;;"><span>製造2課</span></div>
<div class="t" style="left:393.50px;top:454.70px;width:14.0px;font-size:9.5px;line-height:13.5px;color:#333;font-weight:400;;"><span>個</span></div>
<div class="t" style="left:454.00px;top:454.70px;width:9.3px;font-size:9.5px;line-height:13.5px;color:#333;font-weight:400;;"><span>2</span></div>
<div class="t" style="left:465.80px;top:454.70px;width:22.0px;font-size:9.5px;line-height:13.5px;color:#333;font-weight:400;;transform:scaleX(0.900);transform-origin:0 50%;--tw:18.00;"><span>単一</span></div>
<div class="t" style="left:549.80px;top:454.70px;width:25.0px;font-size:9.5px;line-height:13.5px;color:#333;font-weight:400;;transform:scaleX(0.884);transform-origin:0 50%;--tw:21.00;"><span>fMRP</span></div>
<div class="t" style="left:611.50px;top:454.70px;width:71.0px;font-size:9.5px;line-height:13.5px;color:#333;font-weight:400;;transform:scaleX(0.838);transform-origin:0 50%;--tw:67.00;"><span>必要数だけ引当て</span></div>
<div class="t" style="left:688.00px;top:454.70px;width:24.5px;font-size:9.5px;line-height:13.5px;color:#333;font-weight:400;;transform:scaleX(0.683);transform-origin:0 50%;--tw:20.50;"><span>しない</span></div>
<div class="t" style="left:759.90px;top:454.70px;width:24.5px;font-size:9.5px;line-height:13.5px;color:#333;font-weight:400;;transform:scaleX(0.683);transform-origin:0 50%;--tw:20.50;"><span>しない</span></div>
<div class="t" style="left:832.00px;top:454.70px;width:21.7px;font-size:9.5px;line-height:13.5px;color:#333;font-weight:400;;transform:scaleX(0.885);transform-origin:0 50%;--tw:17.70;"><span>不要</span></div>
<div class="t" style="left:884.90px;top:454.70px;width:21.7px;font-size:9.5px;line-height:13.5px;color:#333;font-weight:400;;transform:scaleX(0.885);transform-origin:0 50%;--tw:17.70;"><span>汎用</span></div>
<div class="t" style="left:146.50px;top:470.83px;width:10.9px;font-size:9.5px;line-height:13.5px;color:#333;font-weight:400;;"><span>C</span></div>
<div class="t" style="left:200.80px;top:470.83px;width:34.0px;font-size:9.5px;line-height:13.5px;color:#333;font-weight:400;;"><span>製品Ｃ</span></div>
<div class="t" style="left:257.00px;top:470.83px;width:20.9px;font-size:9.5px;line-height:13.5px;color:#333;font-weight:400;;"><span>S03</span></div>
<div class="t" style="left:309.90px;top:470.83px;width:39.3px;font-size:9.5px;line-height:13.5px;color:#333;font-weight:400;;"><span>製造3課</span></div>
<div class="t" style="left:393.50px;top:470.83px;width:14.0px;font-size:9.5px;line-height:13.5px;color:#333;font-weight:400;;"><span>個</span></div>
<div class="t" style="left:454.00px;top:470.83px;width:9.3px;font-size:9.5px;line-height:13.5px;color:#333;font-weight:400;;"><span>0</span></div>
<div class="t" style="left:465.80px;top:470.83px;width:22.0px;font-size:9.5px;line-height:13.5px;color:#333;font-weight:400;;transform:scaleX(0.900);transform-origin:0 50%;--tw:18.00;"><span>単一</span></div>
<div class="t" style="left:549.80px;top:470.83px;width:25.0px;font-size:9.5px;line-height:13.5px;color:#333;font-weight:400;;transform:scaleX(0.884);transform-origin:0 50%;--tw:21.00;"><span>fMRP</span></div>
<div class="t" style="left:611.50px;top:470.83px;width:71.0px;font-size:9.5px;line-height:13.5px;color:#333;font-weight:400;;transform:scaleX(0.838);transform-origin:0 50%;--tw:67.00;"><span>必要数だけ引当て</span></div>
<div class="t" style="left:688.00px;top:470.83px;width:24.5px;font-size:9.5px;line-height:13.5px;color:#333;font-weight:400;;transform:scaleX(0.683);transform-origin:0 50%;--tw:20.50;"><span>しない</span></div>
<div class="t" style="left:759.90px;top:470.83px;width:24.5px;font-size:9.5px;line-height:13.5px;color:#333;font-weight:400;;transform:scaleX(0.683);transform-origin:0 50%;--tw:20.50;"><span>しない</span></div>
<div class="t" style="left:832.00px;top:470.83px;width:21.7px;font-size:9.5px;line-height:13.5px;color:#333;font-weight:400;;transform:scaleX(0.885);transform-origin:0 50%;--tw:17.70;"><span>不要</span></div>
<div class="t" style="left:884.90px;top:470.83px;width:21.7px;font-size:9.5px;line-height:13.5px;color:#333;font-weight:400;;transform:scaleX(0.885);transform-origin:0 50%;--tw:17.70;"><span>汎用</span></div>
<div class="t" style="left:146.50px;top:486.96px;width:16.2px;font-size:9.5px;line-height:13.5px;color:#333;font-weight:400;;"><span>C1</span></div>
<div class="t" style="left:200.80px;top:486.96px;width:36.2px;font-size:9.5px;line-height:13.5px;color:#333;font-weight:400;;"><span>加工C1</span></div>
<div class="t" style="left:257.00px;top:486.96px;width:20.9px;font-size:9.5px;line-height:13.5px;color:#333;font-weight:400;;"><span>S01</span></div>
<div class="t" style="left:309.90px;top:486.96px;width:39.3px;font-size:9.5px;line-height:13.5px;color:#333;font-weight:400;;"><span>製造1課</span></div>
<div class="t" style="left:393.50px;top:486.96px;width:14.0px;font-size:9.5px;line-height:13.5px;color:#333;font-weight:400;;"><span>個</span></div>
<div class="t" style="left:454.00px;top:486.96px;width:9.3px;font-size:9.5px;line-height:13.5px;color:#333;font-weight:400;;"><span>2</span></div>
<div class="t" style="left:465.80px;top:486.96px;width:22.0px;font-size:9.5px;line-height:13.5px;color:#333;font-weight:400;;transform:scaleX(0.900);transform-origin:0 50%;--tw:18.00;"><span>単一</span></div>
<div class="t" style="left:549.80px;top:486.96px;width:25.0px;font-size:9.5px;line-height:13.5px;color:#333;font-weight:400;;transform:scaleX(0.884);transform-origin:0 50%;--tw:21.00;"><span>fMRP</span></div>
<div class="t" style="left:611.50px;top:486.96px;width:71.0px;font-size:9.5px;line-height:13.5px;color:#333;font-weight:400;;transform:scaleX(0.838);transform-origin:0 50%;--tw:67.00;"><span>必要数だけ引当て</span></div>
<div class="t" style="left:688.00px;top:486.96px;width:24.5px;font-size:9.5px;line-height:13.5px;color:#333;font-weight:400;;transform:scaleX(0.683);transform-origin:0 50%;--tw:20.50;"><span>しない</span></div>
<div class="t" style="left:759.90px;top:486.96px;width:24.5px;font-size:9.5px;line-height:13.5px;color:#333;font-weight:400;;transform:scaleX(0.683);transform-origin:0 50%;--tw:20.50;"><span>しない</span></div>
<div class="t" style="left:832.00px;top:486.96px;width:21.7px;font-size:9.5px;line-height:13.5px;color:#333;font-weight:400;;transform:scaleX(0.885);transform-origin:0 50%;--tw:17.70;"><span>不要</span></div>
<div class="t" style="left:884.90px;top:486.96px;width:21.7px;font-size:9.5px;line-height:13.5px;color:#333;font-weight:400;;transform:scaleX(0.885);transform-origin:0 50%;--tw:17.70;"><span>汎用</span></div>
<div class="t" style="left:146.50px;top:503.09px;width:9.8px;font-size:9.5px;line-height:13.5px;color:#333;font-weight:400;;"><span>T</span></div>
<div class="t" style="left:200.80px;top:503.09px;width:24.0px;font-size:9.5px;line-height:13.5px;color:#333;font-weight:400;;"><span>支給</span></div>
<div class="t" style="left:257.00px;top:503.09px;width:23.0px;font-size:9.5px;line-height:13.5px;color:#333;font-weight:400;;"><span>SKY</span></div>
<div class="t" style="left:309.90px;top:503.09px;width:34.0px;font-size:9.5px;line-height:13.5px;color:#333;font-weight:400;;"><span>支給係</span></div>
<div class="t" style="left:393.50px;top:503.09px;width:14.0px;font-size:9.5px;line-height:13.5px;color:#333;font-weight:400;;"><span>個</span></div>
<div class="t" style="left:454.00px;top:503.09px;width:9.3px;font-size:9.5px;line-height:13.5px;color:#333;font-weight:400;;"><span>4</span></div>
<div class="t" style="left:465.80px;top:503.09px;width:24.0px;font-size:9.5px;line-height:13.5px;color:#333;font-weight:400;;"><span>支給</span></div>
<div class="t" style="left:549.80px;top:503.09px;width:25.0px;font-size:9.5px;line-height:13.5px;color:#333;font-weight:400;;transform:scaleX(0.884);transform-origin:0 50%;--tw:21.00;"><span>fMRP</span></div>
<div class="t" style="left:611.50px;top:503.09px;width:71.0px;font-size:9.5px;line-height:13.5px;color:#333;font-weight:400;;transform:scaleX(0.838);transform-origin:0 50%;--tw:67.00;"><span>必要数だけ引当て</span></div>
<div class="t" style="left:688.00px;top:503.09px;width:24.5px;font-size:9.5px;line-height:13.5px;color:#333;font-weight:400;;transform:scaleX(0.683);transform-origin:0 50%;--tw:20.50;"><span>しない</span></div>
<div class="t" style="left:759.90px;top:503.09px;width:24.5px;font-size:9.5px;line-height:13.5px;color:#333;font-weight:400;;transform:scaleX(0.683);transform-origin:0 50%;--tw:20.50;"><span>しない</span></div>
<div class="t" style="left:832.00px;top:503.09px;width:21.7px;font-size:9.5px;line-height:13.5px;color:#333;font-weight:400;;transform:scaleX(0.885);transform-origin:0 50%;--tw:17.70;"><span>不要</span></div>
<div class="t" style="left:884.90px;top:503.09px;width:21.7px;font-size:9.5px;line-height:13.5px;color:#333;font-weight:400;;transform:scaleX(0.885);transform-origin:0 50%;--tw:17.70;"><span>汎用</span></div>
<div class="t" style="left:146.50px;top:519.22px;width:10.3px;font-size:9.5px;line-height:13.5px;color:#333;font-weight:400;;"><span>X</span></div>
<div class="t" style="left:200.80px;top:519.22px;width:44.0px;font-size:9.5px;line-height:13.5px;color:#333;font-weight:400;;"><span>購入品Ｘ</span></div>
<div class="t" style="left:257.00px;top:519.22px;width:18.8px;font-size:9.5px;line-height:13.5px;color:#333;font-weight:400;;"><span>SZI</span></div>
<div class="t" style="left:309.90px;top:519.22px;width:34.0px;font-size:9.5px;line-height:13.5px;color:#333;font-weight:400;;"><span>資材課</span></div>
<div class="t" style="left:393.50px;top:519.22px;width:14.0px;font-size:9.5px;line-height:13.5px;color:#333;font-weight:400;;"><span>個</span></div>
<div class="t" style="left:443.40px;top:519.22px;width:19.9px;font-size:9.5px;line-height:13.5px;color:#333;font-weight:400;;"><span>255</span></div>
<div class="t" style="left:465.80px;top:519.22px;width:22.0px;font-size:9.5px;line-height:13.5px;color:#333;font-weight:400;;transform:scaleX(0.900);transform-origin:0 50%;--tw:18.00;"><span>単一</span></div>
<div class="t" style="left:549.80px;top:519.22px;width:25.0px;font-size:9.5px;line-height:13.5px;color:#333;font-weight:400;;transform:scaleX(0.884);transform-origin:0 50%;--tw:21.00;"><span>fMRP</span></div>
<div class="t" style="left:611.50px;top:519.22px;width:71.0px;font-size:9.5px;line-height:13.5px;color:#333;font-weight:400;;transform:scaleX(0.838);transform-origin:0 50%;--tw:67.00;"><span>必要数だけ引当て</span></div>
<div class="t" style="left:688.00px;top:519.22px;width:24.5px;font-size:9.5px;line-height:13.5px;color:#333;font-weight:400;;transform:scaleX(0.683);transform-origin:0 50%;--tw:20.50;"><span>しない</span></div>
<div class="t" style="left:759.90px;top:519.22px;width:24.5px;font-size:9.5px;line-height:13.5px;color:#333;font-weight:400;;transform:scaleX(0.683);transform-origin:0 50%;--tw:20.50;"><span>しない</span></div>
<div class="t" style="left:832.00px;top:519.22px;width:21.7px;font-size:9.5px;line-height:13.5px;color:#333;font-weight:400;;transform:scaleX(0.885);transform-origin:0 50%;--tw:17.70;"><span>不要</span></div>
<div class="t" style="left:884.90px;top:519.22px;width:21.7px;font-size:9.5px;line-height:13.5px;color:#333;font-weight:400;;transform:scaleX(0.885);transform-origin:0 50%;--tw:17.70;"><span>汎用</span></div>
<div class="t" style="left:146.50px;top:535.35px;width:10.3px;font-size:9.5px;line-height:13.5px;color:#333;font-weight:400;;"><span>Y</span></div>
<div class="t" style="left:200.80px;top:535.35px;width:44.0px;font-size:9.5px;line-height:13.5px;color:#333;font-weight:400;;"><span>購入品Ｙ</span></div>
<div class="t" style="left:257.00px;top:535.35px;width:18.8px;font-size:9.5px;line-height:13.5px;color:#333;font-weight:400;;"><span>SZI</span></div>
<div class="t" style="left:309.90px;top:535.35px;width:34.0px;font-size:9.5px;line-height:13.5px;color:#333;font-weight:400;;"><span>資材課</span></div>
<div class="t" style="left:393.50px;top:535.35px;width:14.0px;font-size:9.5px;line-height:13.5px;color:#333;font-weight:400;;"><span>個</span></div>
<div class="t" style="left:443.40px;top:535.35px;width:19.9px;font-size:9.5px;line-height:13.5px;color:#333;font-weight:400;;"><span>255</span></div>
<div class="t" style="left:465.80px;top:535.35px;width:22.0px;font-size:9.5px;line-height:13.5px;color:#333;font-weight:400;;transform:scaleX(0.900);transform-origin:0 50%;--tw:18.00;"><span>単一</span></div>
<div class="t" style="left:549.80px;top:535.35px;width:25.0px;font-size:9.5px;line-height:13.5px;color:#333;font-weight:400;;transform:scaleX(0.884);transform-origin:0 50%;--tw:21.00;"><span>fMRP</span></div>
<div class="t" style="left:611.50px;top:535.35px;width:71.0px;font-size:9.5px;line-height:13.5px;color:#333;font-weight:400;;transform:scaleX(0.838);transform-origin:0 50%;--tw:67.00;"><span>必要数だけ引当て</span></div>
<div class="t" style="left:688.00px;top:535.35px;width:24.5px;font-size:9.5px;line-height:13.5px;color:#333;font-weight:400;;transform:scaleX(0.683);transform-origin:0 50%;--tw:20.50;"><span>しない</span></div>
<div class="t" style="left:759.90px;top:535.35px;width:24.5px;font-size:9.5px;line-height:13.5px;color:#333;font-weight:400;;transform:scaleX(0.683);transform-origin:0 50%;--tw:20.50;"><span>しない</span></div>
<div class="t" style="left:832.00px;top:535.35px;width:21.7px;font-size:9.5px;line-height:13.5px;color:#333;font-weight:400;;transform:scaleX(0.885);transform-origin:0 50%;--tw:17.70;"><span>不要</span></div>
<div class="t" style="left:884.90px;top:535.35px;width:21.7px;font-size:9.5px;line-height:13.5px;color:#333;font-weight:400;;transform:scaleX(0.885);transform-origin:0 50%;--tw:17.70;"><span>汎用</span></div>
<div class="t" style="left:146.50px;top:551.48px;width:9.8px;font-size:9.5px;line-height:13.5px;color:#333;font-weight:400;;"><span>Z</span></div>
<div class="t" style="left:200.80px;top:551.48px;width:44.0px;font-size:9.5px;line-height:13.5px;color:#333;font-weight:400;;"><span>購入品Ｚ</span></div>
<div class="t" style="left:257.00px;top:551.48px;width:18.8px;font-size:9.5px;line-height:13.5px;color:#333;font-weight:400;;"><span>SZI</span></div>
<div class="t" style="left:309.90px;top:551.48px;width:34.0px;font-size:9.5px;line-height:13.5px;color:#333;font-weight:400;;"><span>資材課</span></div>
<div class="t" style="left:393.50px;top:551.48px;width:14.0px;font-size:9.5px;line-height:13.5px;color:#333;font-weight:400;;"><span>個</span></div>
<div class="t" style="left:443.40px;top:551.48px;width:19.9px;font-size:9.5px;line-height:13.5px;color:#333;font-weight:400;;"><span>255</span></div>
<div class="t" style="left:465.80px;top:551.48px;width:22.0px;font-size:9.5px;line-height:13.5px;color:#333;font-weight:400;;transform:scaleX(0.900);transform-origin:0 50%;--tw:18.00;"><span>単一</span></div>
<div class="t" style="left:549.80px;top:551.48px;width:25.0px;font-size:9.5px;line-height:13.5px;color:#333;font-weight:400;;transform:scaleX(0.884);transform-origin:0 50%;--tw:21.00;"><span>fMRP</span></div>
<div class="t" style="left:611.50px;top:551.48px;width:71.0px;font-size:9.5px;line-height:13.5px;color:#333;font-weight:400;;transform:scaleX(0.838);transform-origin:0 50%;--tw:67.00;"><span>必要数だけ引当て</span></div>
<div class="t" style="left:688.00px;top:551.48px;width:24.5px;font-size:9.5px;line-height:13.5px;color:#333;font-weight:400;;transform:scaleX(0.683);transform-origin:0 50%;--tw:20.50;"><span>しない</span></div>
<div class="t" style="left:759.90px;top:551.48px;width:24.5px;font-size:9.5px;line-height:13.5px;color:#333;font-weight:400;;transform:scaleX(0.683);transform-origin:0 50%;--tw:20.50;"><span>しない</span></div>
<div class="t" style="left:832.00px;top:551.48px;width:21.7px;font-size:9.5px;line-height:13.5px;color:#333;font-weight:400;;transform:scaleX(0.885);transform-origin:0 50%;--tw:17.70;"><span>不要</span></div>
<div class="t" style="left:884.90px;top:551.48px;width:21.7px;font-size:9.5px;line-height:13.5px;color:#333;font-weight:400;;transform:scaleX(0.885);transform-origin:0 50%;--tw:17.70;"><span>汎用</span></div>
<div style="left:143px;top:387.6px;width:800px;height:1.2px;background:#6fa6dd"></div>
<svg style="left:136px;top:377.5px" width="4" height="6"><path d="M0 0L3 3L0 6z" fill="#222"/></svg>
<div style="left:143.5px;top:572px;width:807.5px;height:14px;background:#fff;border-top:1px solid #dcdcdc"></div>
<svg style="left:146px;top:575.5px" width="20" height="8" viewBox="0 0 20 8"><g fill="#b8b8b8"><rect x="0" y="0" width="1.2" height="7"/><path d="M1.5 3.5L4.5 0V7z"/><path d="M4.5 3.5L7.5 0V7z"/><path d="M14.5 3.5L18 0V7z"/></g></svg>
<div class="t s" style="left:170.60px;top:572.75px;width:28.0px;font-size:9.5px;line-height:13.5px;color:#444;font-weight:400;;transform:scaleX(0.600);transform-origin:0 50%;--tw:24.00;"><span>レコード</span></div>
<div class="t" style="left:196.70px;top:573.05px;width:24.6px;font-size:9.5px;line-height:13.5px;color:#444;font-weight:400;;transform:scaleX(0.866);transform-origin:0 50%;--tw:20.60;"><span>1 / 12</span></div>
<svg style="left:225px;top:575.5px" width="18" height="8" viewBox="0 0 18 8"><g fill="#222"><path d="M0 0L3.5 3.5L0 7z"/><path d="M10 0L13 3.5L10 7z"/><path d="M13 0L16 3.5L13 7z"/><rect x="16" y="0" width="1.2" height="7"/></g></svg>
<div style="left:245.5px;top:572.5px;width:11.3px;height:13px;background:#fff;border:1px solid #d6d6d6"></div>
<svg style="left:249px;top:576px" width="4" height="6"><path d="M3.5 0L0 3L3.5 6z" fill="#222"/></svg>
<div style="left:257px;top:573.5px;width:675px;height:11.5px;background:#e9e9e9"></div>
<div style="left:258.4px;top:573.5px;width:429px;height:11.5px;background:#fff;border:1px solid #dadada"></div>
<div style="left:932.7px;top:572.5px;width:10.7px;height:13px;background:#fff;border:1px solid #d0d0d0"></div>
<svg style="left:936.5px;top:576px" width="4" height="6"><path d="M0 0L3.5 3L0 6z" fill="#222"/></svg>
<div style="left:130px;top:586px;width:829px;height:1.5px;background:#c8c8c8"></div>
<div style="left:130px;top:587px;width:860px;height:24px;background:#dcdcdc"></div>
<div style="left:130px;top:611px;width:860px;height:2px;background:#f0f0f0"></div>
<div class="t s" style="left:134.00px;top:591.80px;width:50.0px;font-size:10px;line-height:14px;color:#444;font-weight:400;;transform:scaleX(0.657);transform-origin:0 50%;--tw:46.00;"><span>アイテムコード</span></div>
<div class="t" style="left:180.50px;top:591.80px;width:50.5px;font-size:10px;line-height:14px;color:#444;font-weight:400;;transform:scaleX(0.876);transform-origin:0 50%;--tw:46.50;"><span>(CODE) = A</span></div>
<svg style="left:872px;top:592px" width="10" height="13" viewBox="0 0 10 13"><path d="M9.3 1H1.2L5.6 6.5L1.2 12H9.3" fill="none" stroke="#333" stroke-width="1.7" stroke-linejoin="miter"/></svg>
<div style="left:887px;top:589px;width:1px;height:19px;background:#b5b5b5"></div>
<div style="left:909.6px;top:588.5px;width:16px;height:19.5px;background:#d6e4f0"></div>
<svg style="left:894.5px;top:592px" width="12.5" height="13" viewBox="0 0 12.5 13"><rect x="0.8" y="0.8" width="10.9" height="11.4" rx="1.6" fill="#f2f2f2" stroke="#3a3a3a" stroke-width="1.5"/><path d="M3 4H9.5M3 6.5H9.5" stroke="#3a3a3a" stroke-width="1.2"/><path d="M3 9H6.5" stroke="#666" stroke-width="1.2"/></svg>
<svg style="left:911.5px;top:592px" width="12.5" height="13" viewBox="0 0 12.5 13"><rect x="0.8" y="0.8" width="10.9" height="11.4" rx="1.6" fill="#e8eef3" stroke="#3c4650" stroke-width="1.5"/><rect x="0.8" y="0.8" width="10.9" height="2.6" fill="#3c4650"/><path d="M3 6.5H9.5" stroke="#777" stroke-width="1.6"/><path d="M3 9.3H9.5" stroke="#3c4650" stroke-width="1.2"/></svg>
<svg style="left:928px;top:592px" width="13" height="13" viewBox="0 0 13 13"><rect x="0.8" y="0.8" width="11.4" height="11.4" rx="1.6" fill="#f2f2f2" stroke="#3a3a3a" stroke-width="1.5"/><path d="M6.5 0.8V12.2M0.8 6.5H12.2" stroke="#3a3a3a" stroke-width="1.4"/></svg>
<div style="left:958.5px;top:36px;width:30px;height:551px;background:#f7f7f7;border-top:1px solid #c9c9c9;border-left:1.5px solid #acacac;border-right:1px solid #bdbdbd"></div>
<div class="t" style="left:953.50px;top:56.20px;width:40.0px;font-size:10px;line-height:14px;color:#4a4a4a;font-weight:400;letter-spacing:0.40px;transform:rotate(90deg);transform-origin:50% 50%;--tw:41.20;--cx:973.50;"><span>詳細絞込</span></div>
<div class="t" style="left:948.50px;top:109.15px;width:50.0px;font-size:10px;line-height:14px;color:#4a4a4a;font-weight:400;transform:rotate(90deg) scaleX(0.862);transform-origin:50% 50%;--tw:43.10;--cx:973.50;"><span>構成ツリー</span></div>
<div class="t" style="left:928.50px;top:174.65px;width:90.0px;font-size:10px;line-height:14px;color:#4a4a4a;font-weight:400;transform:rotate(90deg) scaleX(0.739);transform-origin:50% 50%;--tw:66.50;--cx:973.50;"><span>ソートとフィルター</span></div>
<div style="left:946px;top:587px;width:44px;height:24px;background:#d8d8d8"></div>
<div class="t" style="left:954.70px;top:592.50px;width:18.0px;font-size:9px;line-height:13px;color:#555;font-weight:400;;transform:scaleX(0.931);transform-origin:0 50%;--tw:14.00;"><span>120</span></div>
<div class="t" style="left:978.00px;top:592.50px;width:12.0px;font-size:9px;line-height:13px;color:#555;font-weight:400;;"><span>%</span></div>
<div style="left:951.5px;top:332px;width:22px;height:249px;background:#fff;border:1px solid #dedede;border-top:none;box-shadow:2px 2px 2px rgba(0,0,0,.15)"></div>
<div style="left:952.5px;top:443px;width:20px;height:14px;background:#dde9f6"></div>
<div class="t" style="left:955.40px;top:336.05px;width:14.6px;font-size:9.5px;line-height:13.5px;color:#555;font-weight:400;;"><span>50</span></div>
<div class="t" style="left:955.40px;top:351.35px;width:14.6px;font-size:9.5px;line-height:13.5px;color:#555;font-weight:400;;"><span>60</span></div>
<div class="t" style="left:955.40px;top:366.65px;width:14.6px;font-size:9.5px;line-height:13.5px;color:#555;font-weight:400;;"><span>70</span></div>
<div class="t" style="left:955.40px;top:381.95px;width:14.6px;font-size:9.5px;line-height:13.5px;color:#555;font-weight:400;;"><span>80</span></div>
<div class="t" style="left:955.40px;top:397.25px;width:14.6px;font-size:9.5px;line-height:13.5px;color:#555;font-weight:400;;"><span>90</span></div>
<div class="t" style="left:955.40px;top:412.55px;width:19.9px;font-size:9.5px;line-height:13.5px;color:#555;font-weight:400;;"><span>100</span></div>
<div class="t" style="left:955.40px;top:427.85px;width:19.2px;font-size:9.5px;line-height:13.5px;color:#555;font-weight:400;;"><span>110</span></div>
<div class="t" style="left:955.40px;top:443.15px;width:19.9px;font-size:9.5px;line-height:13.5px;color:#555;font-weight:400;;"><span>120</span></div>
<div class="t" style="left:955.40px;top:458.45px;width:19.9px;font-size:9.5px;line-height:13.5px;color:#555;font-weight:400;;"><span>130</span></div>
<div class="t" style="left:955.40px;top:473.75px;width:19.9px;font-size:9.5px;line-height:13.5px;color:#555;font-weight:400;;"><span>140</span></div>
<div class="t" style="left:955.40px;top:489.05px;width:19.9px;font-size:9.5px;line-height:13.5px;color:#555;font-weight:400;;"><span>150</span></div>
<div class="t" style="left:955.40px;top:504.35px;width:19.9px;font-size:9.5px;line-height:13.5px;color:#555;font-weight:400;;"><span>160</span></div>
<div class="t" style="left:955.40px;top:519.65px;width:19.9px;font-size:9.5px;line-height:13.5px;color:#555;font-weight:400;;"><span>170</span></div>
<div class="t" style="left:955.40px;top:534.95px;width:19.9px;font-size:9.5px;line-height:13.5px;color:#555;font-weight:400;;"><span>180</span></div>
<div class="t" style="left:955.40px;top:550.25px;width:19.9px;font-size:9.5px;line-height:13.5px;color:#555;font-weight:400;;"><span>190</span></div>
<div class="t" style="left:955.40px;top:565.55px;width:19.9px;font-size:9.5px;line-height:13.5px;color:#555;font-weight:400;;"><span>200</span></div>
<svg style="left:948.5px;top:377px" width="3" height="4"><path d="M3 0V3.5L0 3.5z" fill="#222"/></svg>
<svg style="left:949px;top:564px" width="3" height="4"><path d="M0 0H3V3.5z" fill="#222"/></svg>
<div style="left:945.5px;top:330.4px;width:44.5px;height:282px;border:2px solid #d0202a"></div>
<script>
(function(){
var els=document.querySelectorAll('.t');
for(var i=0;i<els.length;i++){
 var el=els[i],st=el.style,tw=parseFloat(st.getPropertyValue('--tw'));
 if(!tw)continue;
 var sp=el.firstChild,cx=parseFloat(st.getPropertyValue('--cx'));
 var rot=!isNaN(cx);
 st.letterSpacing='0px';st.transform='none';
 var nat=sp.getBoundingClientRect().width,n=sp.textContent.length;
 if(!nat||n<2)continue;
 var r=tw/nat,T=rot?'rotate(90deg) ':'';
 if(r<0.98){st.transform=T+'scaleX('+r.toFixed(3)+')';if(!rot)st.transformOrigin='0 50%';}
 else{st.letterSpacing=((tw-nat)/(n-1)).toFixed(2)+'px';st.transform=rot?'rotate(90deg)':'none';}
 if(rot){st.left=(cx-nat/2)+'px';st.width=nat+'px';}
 else st.width=(Math.max(tw,nat)+4)+'px';
}
})();
</script>
</body></html>
